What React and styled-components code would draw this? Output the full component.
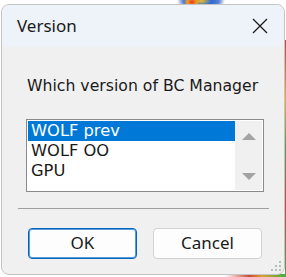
import React, { useState } from "react";
import styled, { createGlobalStyle } from "styled-components";

const GlobalStyle = createGlobalStyle`
  html, body {
    margin: 0;
    padding: 0;
    background: #ffffff;
  }
  * {
    box-sizing: border-box;
  }
`;

const versions = ["WOLF prev", "WOLF OO", "GPU"];

export default function App() {
  const [selected, setSelected] = useState(0);

  return (
    <Page>
      <GlobalStyle />
      <Window>
        <TitleBar>
          <Title>Version</Title>
          <CloseButton aria-label="Close">
            <svg width="16" height="16" viewBox="0 0 16 16">
              <path d="M1 1 L15 15 M15 1 L1 15" stroke="#1b1b1b" strokeWidth="1.3" fill="none" />
            </svg>
          </CloseButton>
        </TitleBar>
        <Body>
          <Label>Which version of BC Manager</Label>
          <ListBox>
            <Items>
              {versions.map((v, i) => (
                <Item key={v} $active={i === selected} onClick={() => setSelected(i)}>
                  {v}
                </Item>
              ))}
            </Items>
            <ScrollTrack>
              <Arrow $dir="up" />
              <Arrow $dir="down" />
            </ScrollTrack>
          </ListBox>
          <Separator />
          <Buttons>
            <Button $primary>OK</Button>
            <Button>Cancel</Button>
          </Buttons>
        </Body>
        <Grip>
          <svg width="12" height="12" viewBox="0 0 12 12">
            {[
              [9, 1],
              [5, 5],
              [9, 5],
              [1, 9],
              [5, 9],
              [9, 9],
            ].map(([x, y]) => (
              <rect key={x + "-" + y} x={x} y={y} width="2" height="2" fill="#bcbcbc" />
            ))}
          </svg>
        </Grip>
      </Window>
    </Page>
  );
}

const Page = styled.div`
  width: 286px;
  height: 277px;
  padding: 4px 1px 0 1px;
  background:
    radial-gradient(ellipse 8px 6px at 192px 2px, #e8342a 0%, #f0a020 60%, rgba(240,160,32,0) 100%),
    radial-gradient(ellipse 24px 10px at 201px 1px, #f0c020 0%, #2a6ad8 45%, #5a80d0 75%, rgba(255,255,255,0) 100%),
    linear-gradient(to bottom, #c2453a 0%, #e0b030 25%, #3cae3c 45%, #d04a30 70%, #3cb040 100%) right 40px / 1px 237px no-repeat,
    linear-gradient(to right, #ffffff 0%, #c84a30 40%, #e0a030 60%, #40b040 100%) 225px bottom / 61px 3px no-repeat,
    #ffffff;
`;

const Window = styled.div`
  position: relative;
  width: 284px;
  height: 271px;
  border: 1px solid #c4c4c4;
  border-radius: 8px;
  background: #f0f0f0;
  overflow: hidden;
  display: flex;
  flex-direction: column;
  font-family: "Noto Sans", "Open Sans", sans-serif;
`;

const TitleBar = styled.div`
  height: 42px;
  flex: none;
  display: flex;
  align-items: center;
  justify-content: space-between;
  padding: 0 16px 0 15px;
  background: #eef2f9;
`;

const Title = styled.span`
  font-size: 17px;
  color: #1a1a1a;
  padding-bottom: 2px;
`;

const CloseButton = styled.div`
  width: 16px;
  height: 16px;
  display: flex;
`;

const Body = styled.div`
  flex: 1;
  display: flex;
  flex-direction: column;
  padding: 29px 16px 0 24px;
`;

const Label = styled.div`
  font-family: "DejaVu Sans", Verdana, sans-serif;
  font-size: 15.7px;
  line-height: 20px;
  color: #1a1a1a;
  margin-left: 1px;
`;

const ListBox = styled.div`
  margin-top: 23px;
  width: 238px;
  height: 73px;
  border: 1px solid #8a8a8a;
  background: #ffffff;
  display: flex;
  padding: 1px;
`;

const Items = styled.div`
  flex: 1;
  display: flex;
  flex-direction: column;
`;

const Item = styled.div`
  height: 20px;
  line-height: 20px;
  padding-left: 3px;
  font-family: "DejaVu Sans", Verdana, sans-serif;
  font-size: 16.3px;
  color: ${(p) => (p.$active ? "#ffffff" : "#1a1a1a")};
  background: ${(p) => (p.$active ? "#0078d7" : "transparent")};
  cursor: default;
`;

const ScrollTrack = styled.div`
  width: 27px;
  background: #f0f0f0;
  display: flex;
  flex-direction: column;
  justify-content: space-between;
  align-items: center;
  padding: 12px 0 10px;
`;

const Arrow = styled.div`
  width: 0;
  height: 0;
  border-left: 7px solid transparent;
  border-right: 7px solid transparent;
  ${(p) =>
    p.$dir === "up"
      ? "border-bottom: 7px solid #a3a3a3;"
      : "border-top: 7px solid #a3a3a3;"}
`;

const Separator = styled.div`
  margin: 16px 0 0 -8px;
  width: 251px;
  height: 1px;
  background: #a0a0a0;
`;

const Buttons = styled.div`
  margin-top: 19px;
  display: flex;
  gap: 16px;
  padding-left: 2px;
`;

const Button = styled.button`
  width: 109px;
  height: 31px;
  border-radius: 4px;
  background: #fdfdfd;
  border: 1px solid ${(p) => (p.$primary ? "#0067c0" : "#d2d2d2")};
  box-shadow: ${(p) => (p.$primary ? "inset 0 0 0 1px #5a9ad6" : "none")};
  font-family: "Noto Sans", "Open Sans", sans-serif;
  font-size: 17px;
  color: #1a1a1a;
  padding: 0;
  padding-bottom: 2px;
`;

const Grip = styled.div`
  position: absolute;
  right: 2px;
  bottom: 2px;
  width: 12px;
  height: 12px;
  display: flex;
`;
